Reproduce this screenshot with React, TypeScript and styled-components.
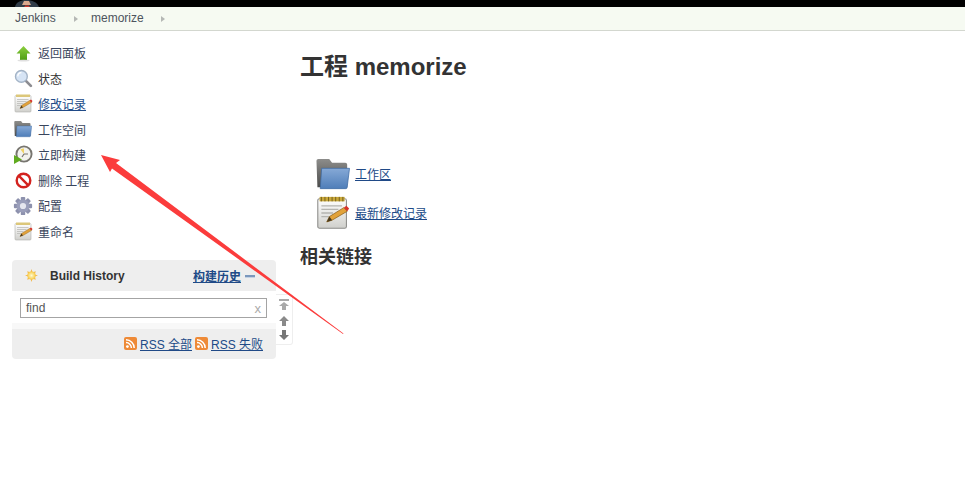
import { FC, ReactNode } from "react"
import styled, { createGlobalStyle } from "styled-components"

const GlobalStyle = createGlobalStyle`
  html, body {
    margin: 0;
    padding: 0;
    background: #fff;
  }
  body {
    font-family: "Liberation Sans", "Noto Sans CJK SC", sans-serif;
    font-size: 12px;
    color: #333;
  }
`

const Page = styled.div`
  position: relative;
  width: 965px;
  height: 483px;
  overflow: hidden;
  background: #fff;
`

const TopBar = styled.div`
  position: relative;
  height: 7px;
  background: #000;
`

const Logo = styled.svg`
  position: absolute;
  left: 14px;
  top: 0;
`

const Breadcrumbs = styled.nav`
  display: flex;
  align-items: center;
  height: 23px;
  padding-left: 15px;
  background: #f6faf2;
  border-bottom: 1px solid #d3d7cf;
`

const Crumb = styled.span`
  width: 59px;
  line-height: 23px;
  color: #4d545d;
`

const CrumbLast = styled(Crumb)`
  width: 70px;
  margin-left: 13px;
`

const Chevron = styled.i`
  width: 0;
  height: 0;
  border-left: 4px solid #b5b8b5;
  border-top: 3.5px solid transparent;
  border-bottom: 3.5px solid transparent;
`

const Body = styled.div`
  display: grid;
  grid-template-columns: 300px 1fr;
`

const Side = styled.aside`
  padding-top: 8.75px;
`

const Tasks = styled.ul`
  list-style: none;
  margin: 0 0 16.25px;
  padding: 0 0 0 14px;
`

const Task = styled.li`
  display: flex;
  align-items: center;
  gap: 6px;
  height: 25.5px;
`

const IconSlot = styled.span`
  display: flex;
  justify-content: center;
  align-items: center;
  width: 18px;
  height: 20px;

  svg {
    flex-shrink: 0;
  }
`

const TaskLabel = styled.a<{ $underline?: boolean; $dark?: boolean }>`
  color: ${(p) => (p.$underline ? "#204a87" : p.$dark ? "#333" : "#39455c")};
  text-decoration: ${(p) => (p.$underline ? "underline" : "none")};
`

const HistoryRow = styled.div`
  display: flex;
  align-items: flex-start;
  margin-left: 12px;
`

const Panel = styled.section`
  width: 264px;
  height: 99px;
  border-radius: 4px;
  background: #eee;
  overflow: hidden;
  display: flex;
  flex-direction: column;
`

const PanelHead = styled.header`
  display: flex;
  align-items: center;
  height: 31px;
  padding: 0 21px 0 13px;
  color: #333;
`

const PanelTitle = styled.b`
  margin-left: 12px;
  flex: 1;
  font-size: 12px;
`

const PanelLink = styled.a`
  font-weight: bold;
  color: #204a87;
  text-decoration: underline;
`

const Collapse = styled.i`
  width: 10px;
  height: 2px;
  margin-left: 4px;
  background: #7b98bd;
  box-shadow: 0 1px 0 #c5d2e3;
`

const Search = styled.div`
  height: 38px;
  padding: 7px 9px 0 8px;
  box-sizing: border-box;
  background: linear-gradient(#fff 84%, #f8f8f8 84%);
`

const SearchBox = styled.div`
  display: flex;
  align-items: center;
  justify-content: space-between;
  box-sizing: border-box;
  height: 20px;
  padding: 0 5px;
  border: 1px solid #a4a4a4;
  color: #555;
`

const Clear = styled.span`
  color: #aaa;
  font-size: 13px;
`

const PanelFoot = styled.footer`
  display: flex;
  align-items: center;
  justify-content: flex-end;
  gap: 3px;
  flex: 1;
  padding: 0 13px 2px 0;
`

const RssLink = styled.a`
  display: flex;
  align-items: center;
  gap: 3px;
  color: #204a87;
  text-decoration: underline;
`

const Pager = styled.div`
  display: flex;
  flex-direction: column;
  align-items: center;
  justify-content: space-between;
  box-sizing: border-box;
  width: 17px;
  height: 51px;
  margin-top: 34px;
  padding: 4px 0 3px;
  background: #fff;
  border: 1px solid #eee;
  border-left: none;
  border-radius: 0 3px 3px 0;
`

const Main = styled.main`
  padding-top: 21px;
`

const Title = styled.h1`
  margin: 0 0 74px;
  font-size: 24px;
  line-height: 30px;
  font-weight: bold;
  color: #333;
`

const Links = styled.div`
  display: flex;
  flex-direction: column;
  padding-left: 16px;
  gap: 4px;
`

const LinkRow = styled.div`
  display: flex;
  align-items: center;
  gap: 5px;
  height: 35px;
`

const MainLink = styled.a`
  color: #204a87;
  text-decoration: underline;
`

const SubTitle = styled.h2`
  margin: 14px 0 0;
  font-size: 18px;
  line-height: 26px;
  font-weight: bold;
  color: #333;
`

const Annotation = styled.svg`
  position: absolute;
  left: 0;
  top: 0;
  pointer-events: none;
`

const Defs = () => (
  <svg width="0" height="0" style={{ position: "absolute" }}>
    <defs>
      <linearGradient id="folderFront" x1="0" y1="0" x2="0" y2="1">
        <stop offset="0" stopColor="#86a9d6" />
        <stop offset="1" stopColor="#4f7eb9" />
      </linearGradient>
      <linearGradient id="folderBack" x1="0" y1="0" x2="0" y2="1">
        <stop offset="0" stopColor="#8d8d8b" />
        <stop offset="1" stopColor="#4c4c4b" />
      </linearGradient>
      <linearGradient id="paper" x1="0" y1="0" x2="0" y2="1">
        <stop offset="0" stopColor="#fff" />
        <stop offset="1" stopColor="#d0d0cc" />
      </linearGradient>
      <linearGradient id="upGreen" x1="0" y1="0" x2="0" y2="1">
        <stop offset="0" stopColor="#8ccf3f" />
        <stop offset="1" stopColor="#4f9e15" />
      </linearGradient>
      <radialGradient id="sun">
        <stop offset="0" stopColor="#fffbd0" />
        <stop offset="1" stopColor="#f6c945" />
      </radialGradient>
    </defs>
  </svg>
)

interface IconProps {
  size?: number
}

const UpIcon: FC<IconProps> = ({ size = 18 }) => (
  <svg width={size} height={size} viewBox="0 0 18 18">
    <path d="M9.5 2 L16.5 9.5 H13 V16 H6 V9.5 H2.5 Z" fill="url(#upGreen)" />
    <ellipse cx="9.5" cy="16.5" rx="6" ry="1" fill="#ccc" opacity="0.6" />
  </svg>
)

const SearchIcon: FC<IconProps> = ({ size = 19 }) => (
  <svg width={size} height={size} viewBox="0 0 18 18">
    <path d="M11 11 L16 16" stroke="#8d8d92" strokeWidth="2.6" strokeLinecap="round" />
    <circle cx="7" cy="7" r="5.6" fill="#d6e4f5" stroke="#a3b3c6" strokeWidth="1.3" />
    <path d="M3.6 7 A3.6 3.6 0 0 1 7 3.5" fill="none" stroke="#fff" strokeWidth="1.2" />
  </svg>
)

const NotepadIcon: FC<IconProps & { small?: boolean }> = ({ size = 18, small }) => (
  <svg width={size} height={size} viewBox="0 0 36 38">
    <rect x="1" y="3" width="32" height="33" rx="2" fill="url(#paper)" stroke={small ? "#b0b0ac" : "#8d8d8a"} strokeWidth="1.2" />
    <rect x="3" y="1" width="28" height="5" fill={small ? "#dcc77a" : "#c9a83a"} />
    {!small && <path d="M5 1 v5 M9 1 v5 M13 1 v5 M17 1 v5 M21 1 v5 M25 1 v5 M29 1 v5" stroke="#6e5b1e" strokeWidth="1" />}
    <path d="M5 11 H28 M5 15 H24 M5 19 H18 M5 23 H14" stroke="#b4b4b0" strokeWidth="1.4" />
    <path d="M11 29 L14 23 L30 13 L34 17 L17 27 Z" fill="#e2a23a" stroke="#8a5f1d" strokeWidth="0.8" />
    <path d="M30 13 L34 17 L36 14 L33 11 Z" fill="#d8322a" />
    <path d="M11 29 L14 23 L17 27 Z" fill="#4a3a1e" />
  </svg>
)

const FolderIcon: FC<IconProps> = ({ size = 18 }) => (
  <svg width={size} height={size} viewBox="0 0 36 36">
    <path d="M0.5 4 a2 2 0 0 1 2 -2 H14 L17 6 H31 a2 2 0 0 1 2 2 V32 H1.5 Z" fill="url(#folderBack)" />
    <path d="M6 12 H35.5 L33 32 a1.5 1.5 0 0 1 -1.5 1.5 H4.5 Z" fill="url(#folderFront)" stroke="#3d6aa3" strokeWidth="0.8" />
  </svg>
)

const BuildIcon: FC<IconProps> = ({ size = 20 }) => (
  <svg width={size} height={size} viewBox="0 0 20 20">
    <circle cx="11" cy="9" r="7.6" fill="#f2f2ee" stroke="#77756f" strokeWidth="1.9" />
    <path d="M11 9 L7.5 4.5 A5 5 0 0 1 11 3.6 Z" fill="#f0d264" />
    <path d="M11 9 L15 9 M11 9 L9 12" stroke="#77756f" strokeWidth="1.2" />
    <path d="M1 10 L9 14.5 L1 19 Z" fill="#60ab1f" />
  </svg>
)

const NoIcon: FC<IconProps> = ({ size = 18 }) => (
  <svg width={size} height={size} viewBox="0 0 18 18">
    <circle cx="9.5" cy="9.5" r="6.8" fill="#fff" stroke="#d3221e" strokeWidth="2.4" />
    <path d="M4.7 4.7 L14.3 14.3" stroke="#d3221e" strokeWidth="2.4" />
  </svg>
)

const GearIcon: FC<IconProps> = ({ size = 20 }) => (
  <svg width={size} height={size} viewBox="0 0 18 18">
    <g fill="#8d91ad">
      {[0, 45, 90, 135].map((a) => (
        <rect key={a} x="7" y="0.8" width="4" height="16.4" rx="0.8" transform={`rotate(${a} 9 9)`} />
      ))}
    </g>
    <circle cx="9" cy="9" r="5.8" fill="#9a9eba" />
    <circle cx="9" cy="9" r="2.8" fill="#e6e7ef" />
  </svg>
)

const SunIcon: FC<IconProps> = ({ size = 13 }) => (
  <svg width={size} height={size} viewBox="0 0 12 12">
    <path d="M6 0 L7 3 L10 2 L9 5 L12 6 L9 7 L10 10 L7 9 L6 12 L5 9 L2 10 L3 7 L0 6 L3 5 L2 2 L5 3 Z" fill="#f3b64c" />
    <circle cx="6" cy="6" r="3.8" fill="url(#sun)" />
  </svg>
)

const RssIcon: FC<IconProps> = ({ size = 13 }) => (
  <svg width={size} height={size} viewBox="0 0 13 13">
    <rect width="13" height="13" rx="2" fill="#ee8a37" />
    <circle cx="3.4" cy="9.6" r="1.4" fill="#fff" />
    <path d="M2 5.6 A5.4 5.4 0 0 1 7.4 11 M2 2.8 A8.2 8.2 0 0 1 10.2 11" fill="none" stroke="#fff" strokeWidth="1.5" />
  </svg>
)

const PagerArrow: FC<{ top?: boolean; down?: boolean }> = ({ top, down }) => (
  <svg width="10" height="11" viewBox="0 0 10 11" style={down ? { transform: "rotate(180deg)" } : undefined}>
    {top && <rect x="0" y="0" width="10" height="2" fill="#a9a9a9" />}
    <path
      d={top ? "M5 3 L10 7 H7 V11 H3 V7 H0 Z" : "M5 1 L10 6 H7 V11 H3 V6 H0 Z"}
      fill={down ? "#777" : top ? "#a9a9a9" : "#8a8a8a"}
    />
  </svg>
)

const tasks: { icon: ReactNode; label: string; underline?: boolean; dark?: boolean }[] = [
  { icon: <UpIcon />, label: "返回面板" },
  { icon: <SearchIcon />, label: "状态", dark: true },
  { icon: <NotepadIcon size={19} small />, label: "修改记录", underline: true },
  { icon: <FolderIcon size={18} />, label: "工作空间" },
  { icon: <BuildIcon />, label: "立即构建" },
  { icon: <NoIcon />, label: "删除 工程" },
  { icon: <GearIcon />, label: "配置" },
  { icon: <NotepadIcon size={19} small />, label: "重命名" },
]

const App: FC = () => (
  <Page>
    <GlobalStyle />
    <Defs />
    <TopBar>
      <Logo width="26" height="7" viewBox="0 0 26 7">
        <path d="M1 7 C2 2 7 0 12 0 C18 0 23 2 25 7 Z" fill="#2f3b47" />
        <path d="M8 5 L10 1 H15 L17 5 Z" fill="#d9a98e" />
        <path d="M10 7 L12 5 L13 6 L14 5 L16 7 Z" fill="#c8382f" />
      </Logo>
    </TopBar>
    <Breadcrumbs>
      <Crumb>Jenkins</Crumb>
      <Chevron />
      <CrumbLast>memorize</CrumbLast>
      <Chevron />
    </Breadcrumbs>
    <Body>
      <Side>
        <Tasks>
          {tasks.map((task) => (
            <Task key={task.label}>
              <IconSlot>{task.icon}</IconSlot>
              <TaskLabel $underline={task.underline} $dark={task.dark}>
                {task.label}
              </TaskLabel>
            </Task>
          ))}
        </Tasks>
        <HistoryRow>
          <Panel>
            <PanelHead>
              <SunIcon />
              <PanelTitle>Build History</PanelTitle>
              <PanelLink>构建历史</PanelLink>
              <Collapse />
            </PanelHead>
            <Search>
              <SearchBox>
                find
                <Clear>x</Clear>
              </SearchBox>
            </Search>
            <PanelFoot>
              <RssLink>
                <RssIcon />
                RSS 全部
              </RssLink>
              <RssLink>
                <RssIcon />
                RSS 失败
              </RssLink>
            </PanelFoot>
          </Panel>
          <Pager>
            <PagerArrow top />
            <PagerArrow />
            <PagerArrow down />
          </Pager>
        </HistoryRow>
      </Side>
      <Main>
        <Title>工程 memorize</Title>
        <Links>
          <LinkRow>
            <FolderIcon size={34} />
            <MainLink>工作区</MainLink>
          </LinkRow>
          <LinkRow>
            <NotepadIcon size={34} />
            <MainLink>最新修改记录</MainLink>
          </LinkRow>
        </Links>
        <SubTitle>相关链接</SubTitle>
      </Main>
    </Body>
    <Annotation width="965" height="483" viewBox="0 0 965 483">
      <path d="M101 155 L120 160 L116 163 L343.5 333.5 L343 334 L112 168.5 L110 172 Z" fill="#fb3c3c" />
    </Annotation>
  </Page>
)

export default App
